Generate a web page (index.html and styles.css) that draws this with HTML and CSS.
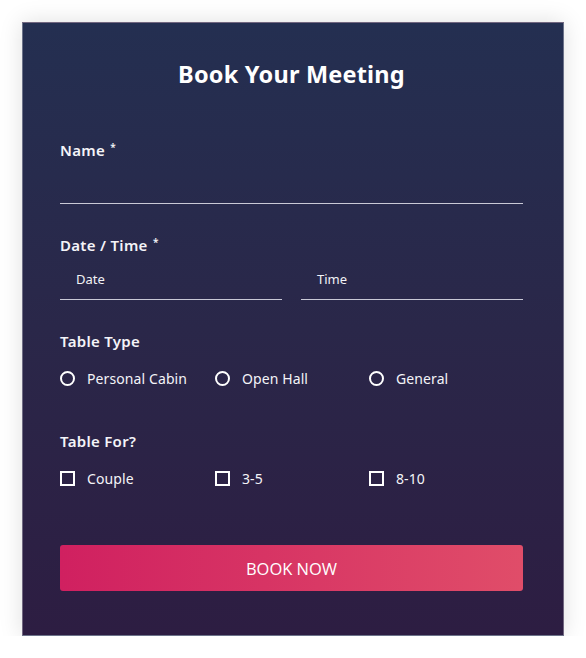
FILE: index.html
```html
<!DOCTYPE html>
<html>
<head>
<meta charset="utf-8">
<link rel="stylesheet" href="styles.css">
</head>
<body>
<form class="card">
  <h1 class="title">Book Your Meeting</h1>

  <div class="label label-name">Name <sup>*</sup></div>
  <div class="field field-name"></div>

  <div class="label label-gap">Date / Time <sup>*</sup></div>
  <div class="pair">
    <div class="field field-small">Date</div>
    <div class="field field-small">Time</div>
  </div>

  <div class="label label-gap">Table Type</div>
  <div class="options">
    <div class="option"><span class="radio"></span>Personal Cabin</div>
    <div class="option"><span class="radio"></span>Open Hall</div>
    <div class="option"><span class="radio"></span>General</div>
  </div>

  <div class="label label-gap2">Table For?</div>
  <div class="options">
    <div class="option"><span class="check"></span>Couple</div>
    <div class="option"><span class="check"></span>3-5</div>
    <div class="option"><span class="check"></span>8-10</div>
  </div>

  <div class="button">BOOK NOW</div>
</form>
</body>
</html>
```

FILE: styles.css
```css
* { box-sizing: border-box; }
html, body { margin: 0; padding: 0; background: #ffffff; }
body { font-family: "Noto Sans", "Open Sans", sans-serif; color: #ffffff; }

.card {
  display: block;
  width: 542px;
  height: 614px;
  margin: 22px 0 0 22px;
  padding: 36px 40px 0 37px;
  border: 1px solid rgba(255, 255, 255, 0.33);
  background: linear-gradient(180deg, #242f51 0%, #2a2749 50%, #2d1d42 100%);
  box-shadow: 0 0 22px rgba(0, 0, 0, 0.13);
}

.title {
  margin: 0;
  height: 30px;
  line-height: 30px;
  font-size: 23.5px;
  font-weight: 700;
  text-align: center;
  letter-spacing: 0.2px;
}

.label {
  height: 20px;
  line-height: 20px;
  font-size: 15px;
  font-weight: 600;
  color: #f4f4f8;
  letter-spacing: 0.3px;
}
.label sup { font-size: 10px; line-height: 0; vertical-align: 5px; margin-left: 1px; }
.label-name { margin-top: 51px; }
.label-gap { margin-top: 31px; }
.label-gap2 { margin-top: 43px; }

.field {
  border-bottom: 1px solid #c9c9d6;
}
.field-name { height: 44px; }

.pair {
  display: grid;
  grid-template-columns: 1fr 1fr;
  column-gap: 19px;
}
.field-small {
  height: 45px;
  padding: 14px 0 0 16px;
  font-size: 13px;
  line-height: 20px;
  color: #f2f2f6;
}

.options {
  display: grid;
  grid-template-columns: 155px 154px 1fr;
  margin-top: 17px;
}
.option {
  display: flex;
  align-items: center;
  gap: 12px;
  height: 20px;
  font-size: 14px;
  color: #f4f4f8;
  letter-spacing: 0.1px;
}
.radio {
  width: 15px;
  height: 15px;
  border: 2px solid #ffffff;
  border-radius: 50%;
  flex: none;
}
.check {
  width: 15px;
  height: 15px;
  border: 2px solid #ffffff;
  flex: none;
}

.button {
  margin-top: 57px;
  height: 46px;
  border-radius: 3px;
  background: linear-gradient(90deg, #d02060 0%, #e04d69 100%);
  display: flex;
  align-items: center;
  justify-content: center;
  font-family: "Open Sans", "Noto Sans", sans-serif;
  font-size: 16.5px;
  font-weight: 500;
  color: #ffffff;
}
```
